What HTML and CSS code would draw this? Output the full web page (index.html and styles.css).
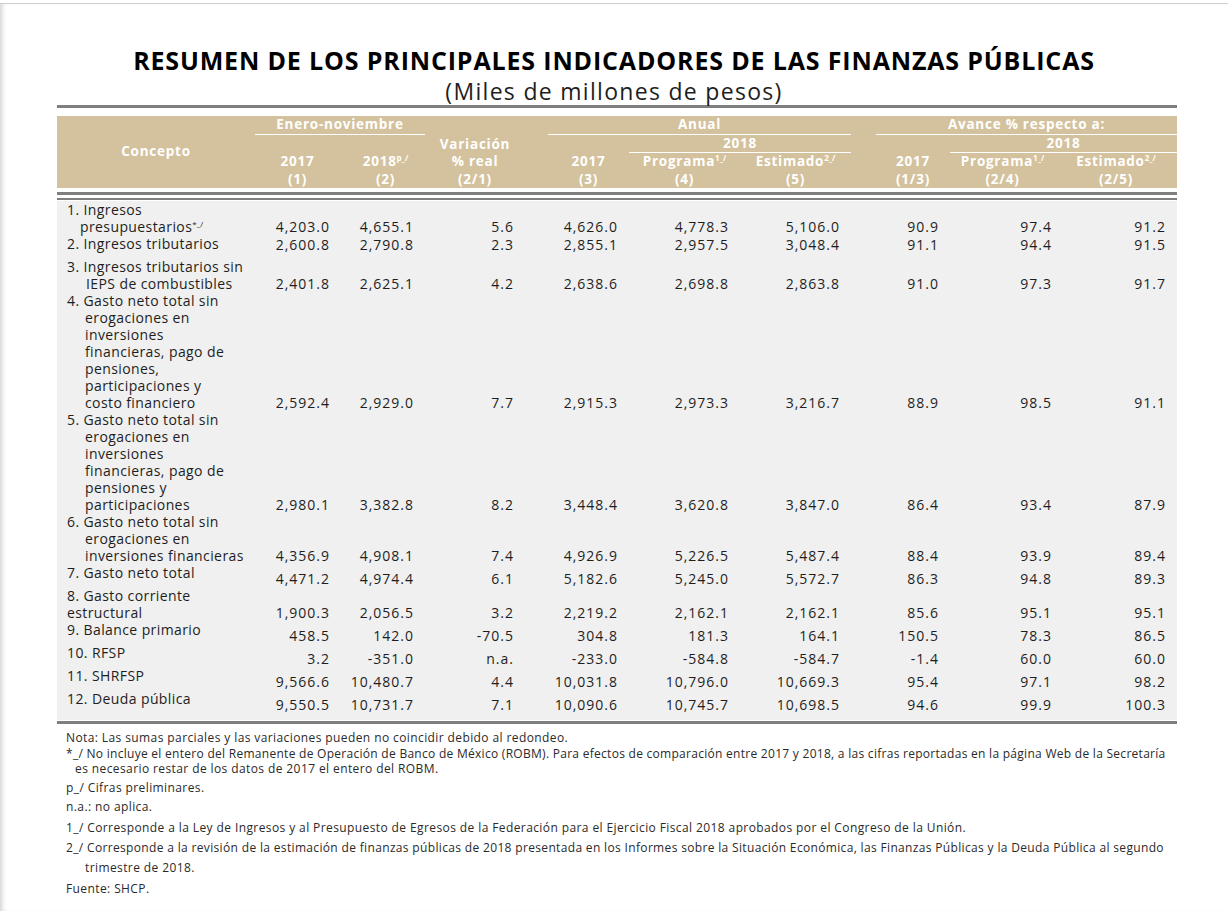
FILE: index.html
```html
<!DOCTYPE html>
<html lang="es">
<head>
<meta charset="utf-8">
<title>Resumen de los principales indicadores de las finanzas públicas</title>
<link rel="stylesheet" href="styles.css">
</head>
<body>
<div class="page">
  <h1 class="title">RESUMEN DE LOS PRINCIPALES INDICADORES DE LAS FINANZAS PÚBLICAS</h1>
  <p class="subtitle">(Miles de millones de pesos)</p>
  <div class="frame">
    <div class="rule-top"></div>
    <table class="data">
      <colgroup>
        <col class="w-concept"><col class="w-c1"><col class="w-c2"><col class="w-var"><col class="w-sp1">
        <col class="w-a17"><col class="w-aprog"><col class="w-aest"><col class="w-sp2">
        <col class="w-v17"><col class="w-vprog"><col class="w-vest">
      </colgroup>
      <thead>
        <tr class="h1">
          <th rowspan="3" class="h-concept">Concepto</th>
          <th colspan="2" class="ul">Enero-noviembre</th>
          <th rowspan="3" class="h-var">Variación<br>% real<br>(2/1)</th>
          <th rowspan="3"></th>
          <th colspan="3" class="ul">Anual</th>
          <th rowspan="3"></th>
          <th colspan="3" class="ul">Avance % respecto a:</th>
        </tr>
        <tr class="h2">
          <th colspan="2"></th>
          <th></th>
          <th colspan="2" class="ul">2018</th>
          <th></th>
          <th colspan="2" class="ul">2018</th>
        </tr>
        <tr class="h3">
          <th>2017<br>(1)</th>
          <th class="sh-c2">2018<sup>p_/</sup><br>(2)</th>
          <th>2017<br>(3)</th>
          <th>Programa<sup>1_/</sup><br>(4)</th>
          <th>Estimado<sup>2_/</sup><br>(5)</th>
          <th>2017<br>(1/3)</th>
          <th>Programa<sup>1_/</sup><br>(2/4)</th>
          <th>Estimado<sup>2_/</sup><br>(2/5)</th>
        </tr>
      </thead>
      <tbody>
        <tr class="rules"><td colspan="12"><div class="rule-a"></div><div class="rule-b"></div></td></tr>
        <tr>
          <td class="concept hang13">1. Ingresos<br>presupuestarios<sup>*_/</sup></td>
          <td class="n c1">4,203.0</td><td class="n c2">4,655.1</td><td class="n var">5.6</td><td></td>
          <td class="n a17">4,626.0</td><td class="n aprog">4,778.3</td><td class="n aest">5,106.0</td><td></td>
          <td class="n v17">90.9</td><td class="n vprog">97.4</td><td class="n vest">91.2</td>
        </tr>
        <tr class="single top">
          <td class="concept">2. Ingresos tributarios</td>
          <td class="n c1">2,600.8</td><td class="n c2">2,790.8</td><td class="n var">2.3</td><td></td>
          <td class="n a17">2,855.1</td><td class="n aprog">2,957.5</td><td class="n aest">3,048.4</td><td></td>
          <td class="n v17">91.1</td><td class="n vprog">94.4</td><td class="n vest">91.5</td>
        </tr>
        <tr>
          <td class="concept hang19">3. Ingresos tributarios sin<br>IEPS de combustibles</td>
          <td class="n c1">2,401.8</td><td class="n c2">2,625.1</td><td class="n var">4.2</td><td></td>
          <td class="n a17">2,638.6</td><td class="n aprog">2,698.8</td><td class="n aest">2,863.8</td><td></td>
          <td class="n v17">91.0</td><td class="n vprog">97.3</td><td class="n vest">91.7</td>
        </tr>
        <tr>
          <td class="concept hang18">4. Gasto neto total sin<br>erogaciones en<br>inversiones<br>financieras, pago de<br>pensiones,<br>participaciones y<br>costo financiero</td>
          <td class="n c1">2,592.4</td><td class="n c2">2,929.0</td><td class="n var">7.7</td><td></td>
          <td class="n a17">2,915.3</td><td class="n aprog">2,973.3</td><td class="n aest">3,216.7</td><td></td>
          <td class="n v17">88.9</td><td class="n vprog">98.5</td><td class="n vest">91.1</td>
        </tr>
        <tr>
          <td class="concept hang18">5. Gasto neto total sin<br>erogaciones en<br>inversiones<br>financieras, pago de<br>pensiones y<br>participaciones</td>
          <td class="n c1">2,980.1</td><td class="n c2">3,382.8</td><td class="n var">8.2</td><td></td>
          <td class="n a17">3,448.4</td><td class="n aprog">3,620.8</td><td class="n aest">3,847.0</td><td></td>
          <td class="n v17">86.4</td><td class="n vprog">93.4</td><td class="n vest">87.9</td>
        </tr>
        <tr>
          <td class="concept hang18">6. Gasto neto total sin<br>erogaciones en<br>inversiones financieras</td>
          <td class="n c1">4,356.9</td><td class="n c2">4,908.1</td><td class="n var">7.4</td><td></td>
          <td class="n a17">4,926.9</td><td class="n aprog">5,226.5</td><td class="n aest">5,487.4</td><td></td>
          <td class="n v17">88.4</td><td class="n vprog">93.9</td><td class="n vest">89.4</td>
        </tr>
        <tr class="single">
          <td class="concept">7. Gasto neto total</td>
          <td class="n c1">4,471.2</td><td class="n c2">4,974.4</td><td class="n var">6.1</td><td></td>
          <td class="n a17">5,182.6</td><td class="n aprog">5,245.0</td><td class="n aest">5,572.7</td><td></td>
          <td class="n v17">86.3</td><td class="n vprog">94.8</td><td class="n vest">89.3</td>
        </tr>
        <tr>
          <td class="concept">8. Gasto corriente<br>estructural</td>
          <td class="n c1">1,900.3</td><td class="n c2">2,056.5</td><td class="n var">3.2</td><td></td>
          <td class="n a17">2,219.2</td><td class="n aprog">2,162.1</td><td class="n aest">2,162.1</td><td></td>
          <td class="n v17">85.6</td><td class="n vprog">95.1</td><td class="n vest">95.1</td>
        </tr>
        <tr class="single">
          <td class="concept">9. Balance primario</td>
          <td class="n c1">458.5</td><td class="n c2">142.0</td><td class="n var">-70.5</td><td></td>
          <td class="n a17">304.8</td><td class="n aprog">181.3</td><td class="n aest">164.1</td><td></td>
          <td class="n v17">150.5</td><td class="n vprog">78.3</td><td class="n vest">86.5</td>
        </tr>
        <tr class="single">
          <td class="concept">10. RFSP</td>
          <td class="n c1">3.2</td><td class="n c2">-351.0</td><td class="n var">n.a.</td><td></td>
          <td class="n a17">-233.0</td><td class="n aprog">-584.8</td><td class="n aest">-584.7</td><td></td>
          <td class="n v17">-1.4</td><td class="n vprog">60.0</td><td class="n vest">60.0</td>
        </tr>
        <tr class="single">
          <td class="concept">11. SHRFSP</td>
          <td class="n c1">9,566.6</td><td class="n c2">10,480.7</td><td class="n var">4.4</td><td></td>
          <td class="n a17">10,031.8</td><td class="n aprog">10,796.0</td><td class="n aest">10,669.3</td><td></td>
          <td class="n v17">95.4</td><td class="n vprog">97.1</td><td class="n vest">98.2</td>
        </tr>
        <tr class="single last">
          <td class="concept">12. Deuda pública</td>
          <td class="n c1">9,550.5</td><td class="n c2">10,731.7</td><td class="n var">7.1</td><td></td>
          <td class="n a17">10,090.6</td><td class="n aprog">10,745.7</td><td class="n aest">10,698.5</td><td></td>
          <td class="n v17">94.6</td><td class="n vprog">99.9</td><td class="n vest">100.3</td>
        </tr>
      </tbody>
    </table>
    <div class="rule-bottom"></div>
    <div class="notes">
      <p class="note n-nota">Nota: Las sumas parciales y las variaciones pueden no coincidir debido al redondeo.</p>
      <p class="note n-star"><span class="squeeze">*_/ No incluye el entero del Remanente de Operación de Banco de México (ROBM). Para efectos de comparación entre 2017 y 2018, a las cifras reportadas en la página Web de la Secretaría</span><br><span class="cont1">es necesario restar de los datos de 2017 el entero del ROBM.</span></p>
      <p class="note n-p">p_/ Cifras preliminares.</p>
      <p class="note n-na">n.a.: no aplica.</p>
      <p class="note n-1">1_/ Corresponde a la Ley de Ingresos y al Presupuesto de Egresos de la Federación para el Ejercicio Fiscal 2018 aprobados por el Congreso de la Unión.</p>
      <p class="note n-2"><span class="squeeze2">2_/ Corresponde a la revisión de la estimación de finanzas públicas de 2018 presentada en los Informes sobre la Situación Económica, las Finanzas Públicas y la Deuda Pública al segundo</span><br><span class="cont2">trimestre de 2018.</span></p>
      <p class="note n-fuente">Fuente: SHCP.</p>
    </div>
  </div>
</div>
</body>
</html>
```

FILE: styles.css
```css
* { box-sizing: border-box; }

html, body {
  margin: 0;
  padding: 0;
  background: #ffffff;
}

body {
  font-family: "Open Sans", "Noto Sans", "DejaVu Sans", sans-serif;
  color: #1e1e1e;
}

.page {
  margin-top: 3px;
  border-top: 1px solid #cfcfcf;
  min-height: 908px;
  padding-top: 41px;
  box-shadow: inset 5px 0 5px -3px rgba(0, 0, 0, 0.18);
}

.title {
  margin: 0;
  text-align: center;
  font-size: 25px;
  line-height: 30px;
  font-weight: 700;
  color: #000;
  letter-spacing: 0.85px;
}

.subtitle {
  margin: 3px 0 0 0;
  text-align: center;
  font-size: 23px;
  line-height: 26px;
  font-weight: 400;
  color: #1e1e1e;
  letter-spacing: 1.3px;
}

.frame {
  width: 1120px;
  margin: 1px 0 0 57px;
}

.rule-top {
  height: 3px;
  background: #7f7f7f;
  margin-bottom: 8px;
}

table.data {
  width: 1120px;
  table-layout: fixed;
  border-collapse: collapse;
  border-spacing: 0;
}

.w-concept { width: 198px; }
.w-c1 { width: 85px; }
.w-c2 { width: 85px; }
.w-var { width: 100px; }
.w-sp1 { width: 23px; }
.w-a17 { width: 81px; }
.w-aprog { width: 111px; }
.w-aest { width: 111px; }
.w-sp2 { width: 25px; }
.w-v17 { width: 74px; }
.w-vprog { width: 105px; }
.w-vest { width: 122px; }

thead th {
  background: #d3c29d;
  color: #ffffff;
  font-weight: 700;
  font-size: 13.5px;
  line-height: 17.5px;
  letter-spacing: 0.75px;
  text-align: center;
  padding: 0;
  vertical-align: bottom;
  white-space: nowrap;
}

thead th.ul {
  border-bottom: 1px solid #ffffff;
}

tr.h1 th { height: 18px; }
tr.h2 th { height: 18px; }
tr.h3 th { height: 35px; }

th.h-concept {
  vertical-align: middle;
}

th.h-var { vertical-align: bottom; }
th.sh-c2 { padding-left: 6px; }

sup {
  font-size: 8px;
  line-height: 0;
  vertical-align: 5px;
  letter-spacing: 0;
}

tr.rules td {
  padding: 0;
  background: #ffffff;
  height: 13px;
  vertical-align: top;
}

.rule-a {
  height: 3px;
  background: #7f7f7f;
  margin-top: 4px;
}

.rule-b {
  height: 2px;
  background: #7f7f7f;
  margin-top: 3px;
}

tbody td {
  background: #f0f0f0;
  padding: 0;
  font-size: 14px;
  line-height: 17px;
  color: #1e1e1e;
}

td.concept {
  vertical-align: top;
  padding-left: 10px;
  white-space: nowrap;
  letter-spacing: 0.4px;
}

td.hang13 { padding-left: 23px; text-indent: -13px; }
td.hang18 { padding-left: 28px; text-indent: -18px; }
td.hang19 { padding-left: 29px; text-indent: -19px; }

td.n {
  text-align: right;
  vertical-align: bottom;
  white-space: nowrap;
  letter-spacing: 1px;
}

tr.single td.concept { padding-bottom: 6px; }
tr.top td.n { vertical-align: top; padding-top: 1px; }
tr.last td.concept { padding-bottom: 13px; }
tr.last td.n { padding-bottom: 7px; }

td.c1 { padding-right: 10px; }
td.c2 { padding-right: 11px; }
td.var { padding-right: 11px; }
td.a17 { padding-right: 11px; }
td.aprog { padding-right: 11px; }
td.aest { padding-right: 11px; }
td.v17 { padding-right: 11px; }
td.vprog { padding-right: 3px; }
td.vest { padding-right: 11px; }

.rule-bottom {
  height: 3px;
  background: #7f7f7f;
  margin-top: 1px;
}

.notes {
  padding-left: 9px;
  padding-top: 6px;
  font-size: 12px;
  color: #2a2a2a;
  letter-spacing: 0.4px;
}

.note {
  margin: 0;
  line-height: 15px;
  white-space: nowrap;
}

.n-star { margin-top: 1px; }
.n-p { margin-top: 4px; }
.n-na { margin-top: 4px; }
.n-1 { margin-top: 6px; }
.n-2 { margin-top: 3px; }
.n-fuente { margin-top: 3px; }

.squeeze { letter-spacing: 0.28px; }
.squeeze2 { letter-spacing: 0.34px; line-height: 20px; }
.cont1 { padding-left: 9px; }
.cont2 { padding-left: 19px; line-height: 20px; }
```
